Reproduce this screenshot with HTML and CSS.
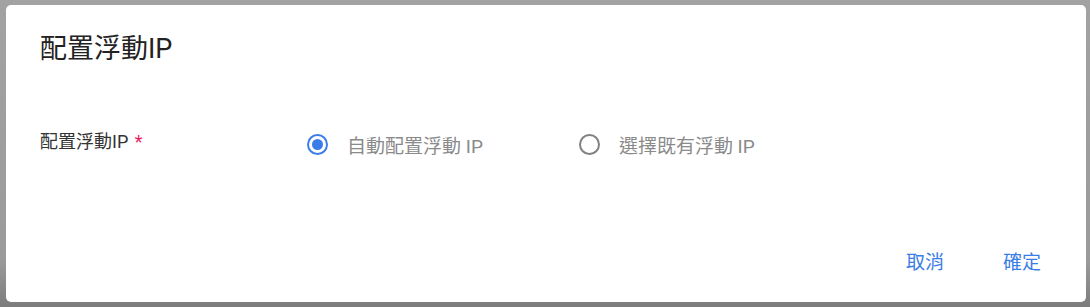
FILE: index.html
```html
<!DOCTYPE html>
<html lang="zh-Hant">
<head>
<meta charset="utf-8">
<link rel="stylesheet" href="styles.css">
</head>
<body>
<div class="backdrop">
  <div class="dialog">
    <h2 class="title">配置浮動IP</h2>
    <div class="content">
      <div class="field-label">配置浮動IP <span class="req">*</span></div>
      <div class="radios">
        <label class="radio checked">
          <span class="circle"><span class="dot"></span></span>
          <span class="rtext">自動配置浮動 IP</span>
        </label>
        <label class="radio">
          <span class="circle"></span>
          <span class="rtext">選擇既有浮動 IP</span>
        </label>
      </div>
    </div>
    <div class="actions">
      <button class="btn">取消</button>
      <button class="btn">確定</button>
    </div>
  </div>
</div>
</body>
</html>
```
FILE: styles.css
```css
html, body {
  margin: 0;
  padding: 0;
  width: 1090px;
  height: 307px;
  overflow: hidden;
  background: #9c9c9c;
  font-family: Roboto, "Noto Sans CJK TC", sans-serif;
}
.backdrop {
  padding: 5px 4px 5px 6px;
  box-sizing: border-box;
  height: 307px;
  background: linear-gradient(to bottom, #a2a2a2 0%, #9a9a9a 85%, #7c7c7c 100%);
}
.dialog {
  width: 1080px;
  height: 297px;
  box-sizing: border-box;
  background: #fff;
  border-radius: 5px;
  padding: 26px 0 0 34px;
  display: flex;
  flex-direction: column;
}
.title {
  margin: 0;
  font-weight: 400;
  font-size: 27px;
  line-height: 36px;
  color: #222;
}
.content {
  display: flex;
  align-items: center;
  margin-top: 60px;
  height: 30px;
}
.field-label {
  width: 267px;
  font-size: 18px;
  color: #333;
  margin-top: -4px;
}
.req {
  color: #e91e63;
  margin-left: 2px;
}
.radios {
  display: flex;
  align-items: center;
  margin-top: 4px;
}
.radio {
  display: flex;
  align-items: center;
  margin-right: 96px;
}
.circle {
  width: 21px;
  height: 21px;
  box-sizing: border-box;
  border: 2px solid #808080;
  border-radius: 50%;
  display: flex;
  align-items: center;
  justify-content: center;
}
.checked .circle {
  border-color: #3b7de8;
}
.dot {
  width: 11px;
  height: 11px;
  border-radius: 50%;
  background: #3b7de8;
}
.rtext {
  margin-left: 19px;
  font-size: 19px;
  color: #8a8a8a;
}
.actions {
  margin-top: auto;
  margin-bottom: 20px;
  display: flex;
  justify-content: flex-end;
  padding-right: 29px;
  gap: 27px;
}
.btn {
  background: none;
  border: none;
  font-family: Roboto, "Noto Sans CJK TC", sans-serif;
  font-size: 19px;
  color: #3b7de8;
  padding: 6px 16px;
  line-height: 26px;
  cursor: pointer;
}
```
